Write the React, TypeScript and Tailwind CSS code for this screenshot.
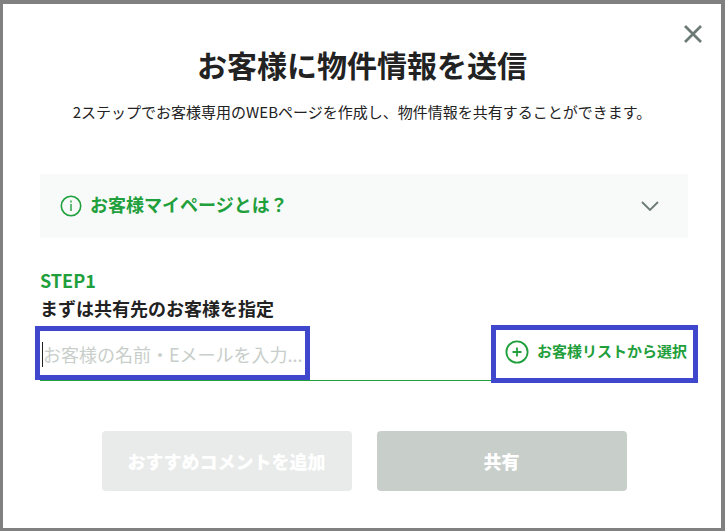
import { useState } from "react";

const CloseIcon = () => (
  <svg width="18" height="18" viewBox="0 0 18 18" fill="none" stroke="currentColor" strokeWidth="2.7" aria-hidden="true">
    <path d="M1 1l16 16M17 1L1 17" />
  </svg>
);

const InfoIcon = () => (
  <svg width="22" height="22" viewBox="0 0 22 22" fill="none" stroke="currentColor" strokeWidth="1.6" aria-hidden="true">
    <circle cx="11" cy="11" r="9.7" />
    <path d="M11 9v7M11 5.6v1.8" strokeWidth="1.4" />
  </svg>
);

const ChevronIcon = ({ open }: { open: boolean }) => (
  <svg
    width="18"
    height="10"
    viewBox="0 0 18 10"
    fill="none"
    stroke="currentColor"
    strokeWidth="1.8"
    className={open ? "rotate-180" : ""}
    aria-hidden="true"
  >
    <path d="M1 1l8 8 8-8" />
  </svg>
);

const PlusCircleIcon = () => (
  <svg width="24" height="24" viewBox="0 0 24 24" fill="none" stroke="currentColor" strokeWidth="1.8" aria-hidden="true">
    <circle cx="12" cy="12" r="10.6" />
    <path d="M12 7.5v9M7.5 12h9" />
  </svg>
);

const App = () => {
  const [open, setOpen] = useState(false);
  const [customer, setCustomer] = useState("");

  return (
    <div className="flex min-h-screen flex-col bg-[#808080] pt-1 pr-1 pb-[3px] pl-[3px] font-['Noto_Sans_CJK_JP',sans-serif] text-[#222222]">
      <main role="dialog" aria-labelledby="dialog-title" className="relative flex-1 bg-white pt-10 pb-9">
        <button type="button" aria-label="閉じる" className="absolute top-[21px] right-[19px] text-[#6b7a74]">
          <CloseIcon />
        </button>

        <header className="text-center">
          <h1 id="dialog-title" className="text-[30px] leading-10 font-bold">
            お客様に物件情報を送信
          </h1>
          <p className="mt-4 text-[15px] leading-6">
            2ステップでお客様専用のWEBページを作成し、物件情報を共有することができます。
          </p>
        </header>

        <div className="mt-[50px] pr-[33px] pl-[37px]">
          <button
            type="button"
            aria-expanded={open}
            onClick={() => setOpen(!open)}
            className="flex h-16 w-full items-center bg-[#f8faf9] pr-[29px] pl-5 text-[#1fa03c]"
          >
            <InfoIcon />
            <span className="ml-2 flex-1 pb-1 text-left text-lg font-bold">お客様マイページとは？</span>
            <span className="text-[#6b7a74]">
              <ChevronIcon open={open} />
            </span>
          </button>

          <label htmlFor="customer" className="mt-7 block text-lg leading-7 font-bold">
            <span className="block text-[#1fa03c]">STEP1</span>
            まずは共有先のお客様を指定
          </label>

          <div className="mt-[2px] flex h-[57px] justify-between border-b border-[#1fa03c]">
            <div className="relative w-[265px]">
              <input
                id="customer"
                type="text"
                value={customer}
                onChange={(e) => setCustomer(e.target.value)}
                placeholder="お客様の名前・Eメールを入力..."
                className="h-full w-full bg-transparent pt-1 pl-[3px] text-lg placeholder-[#c8ceca] outline-none"
              />
              <span className="absolute top-[18px] left-[2px] h-[25px] w-px bg-[#222222]" />
              <span className="pointer-events-none absolute top-[2px] -right-[5px] bottom-0 -left-[5px] border-[5px] border-[#3f48cc]" />
            </div>
            <div className="relative w-[187px]">
              <button type="button" className="flex h-full w-full items-center gap-2 pl-[4px] text-[15px] whitespace-nowrap font-bold text-[#1fa03c]">
                <PlusCircleIcon />
                <span className="pb-[2px]">お客様リストから選択</span>
              </button>
              <span className="pointer-events-none absolute top-px -right-[10px] -bottom-[3px] -left-[10px] border-[5px] border-[#3f48cc]" />
            </div>
          </div>

          <div className="mt-[50px] flex justify-center gap-[25px]">
            <button type="button" disabled className="h-[60px] w-[250px] rounded-sm bg-[#e9ebea] text-lg font-black text-white">
              おすすめコメントを追加
            </button>
            <button type="button" disabled className="h-[60px] w-[250px] rounded-sm bg-[#c8ceca] text-lg font-black text-white">
              共有
            </button>
          </div>
        </div>
      </main>
    </div>
  );
};

export default App;
